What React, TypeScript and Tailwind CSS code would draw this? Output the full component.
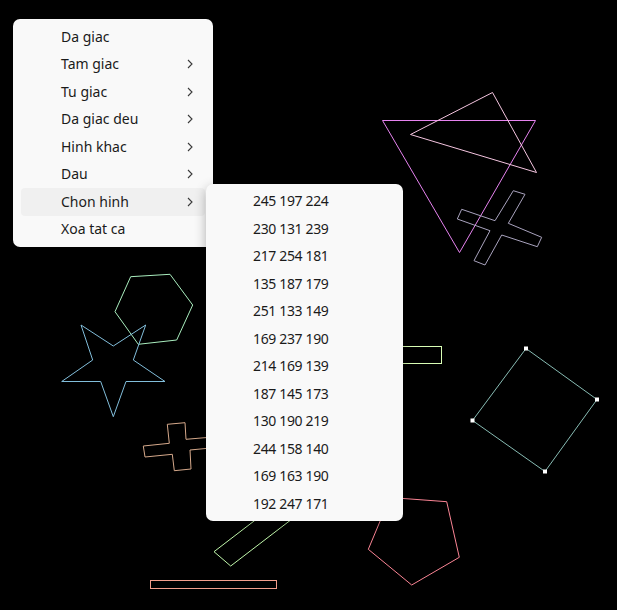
import React from "react";

const font = { fontFamily: '"Noto Sans", "Open Sans", sans-serif' };

function Chevron() {
  return (
    <svg width="6" height="10" viewBox="0 0 6 10" className="block">
      <polyline points="1,1 5,5 1,9" fill="none" stroke="#3a3a3a" strokeWidth="1.1" />
    </svg>
  );
}

const mainItems: { label: string; sub: boolean; active?: boolean }[] = [
  { label: "Da giac", sub: false },
  { label: "Tam giac", sub: true },
  { label: "Tu giac", sub: true },
  { label: "Da giac deu", sub: true },
  { label: "Hinh khac", sub: true },
  { label: "Dau", sub: true },
  { label: "Chon hinh", sub: true, active: true },
  { label: "Xoa tat ca", sub: false },
];

const colors = [
  "245 197 224",
  "230 131 239",
  "217 254 181",
  "135 187 179",
  "251 133 149",
  "169 237 190",
  "214 169 139",
  "187 145 173",
  "130 190 219",
  "244 158 140",
  "169 163 190",
  "192 247 171",
];

function Canvas() {
  const sq = [
    [526, 348.5],
    [597, 399.5],
    [545, 471.5],
    [472.5, 420.5],
  ];
  return (
    <svg width="617" height="610" viewBox="0 0 617 610" className="absolute inset-0">
      {/* big magenta triangle */}
      <polygon points="382.5,120.5 535.5,120.5 459.5,252.5" fill="none" stroke="rgb(230,131,239)" strokeWidth="1" />
      {/* pink triangle */}
      <polygon points="492.5,92.5 410.5,134.5 536.5,172.5" fill="none" stroke="rgb(245,197,224)" strokeWidth="1" />
      {/* rotated cross */}
      <polygon
        points="513.3,190.7 525,194.3 508.3,223.3 541.7,237.3 537.3,246.7 501.7,235 485,265 474,260.7 490,230.7 457.3,219 461.7,209.3 495,220.7"
        fill="none"
        stroke="rgb(169,163,190)"
        strokeWidth="1"
      />
      {/* hexagon */}
      <polygon
        points="130.7,276.7 170,274.3 192.7,305 176.7,340 138.3,344.3 115,311.7"
        fill="none"
        stroke="rgb(169,237,190)"
        strokeWidth="1"
      />
      {/* star */}
      <polygon
        points="81,325 113.3,346 145.7,325 133.3,360 165,381.5 126,381.5 113.3,416.7 100.7,381.5 61.7,381.5 92.7,360"
        fill="none"
        stroke="rgb(130,190,219)"
        strokeWidth="1"
      />
      {/* orange cross */}
      <polygon
        points="167.3,424.3 185,422.7 186,439.3 213,437 214,447.7 190,450 191,469 174.3,470.7 172.3,454.3 145,457 143.3,446 169.3,443.3"
        fill="none"
        stroke="rgb(214,169,139)"
        strokeWidth="1"
      />
      {/* small green rect */}
      <rect x="360.5" y="346.5" width="81" height="17" fill="none" stroke="rgb(217,254,181)" strokeWidth="1" />
      {/* teal square */}
      <polygon points={sq.map((p) => p.join(",")).join(" ")} fill="none" stroke="rgb(135,187,179)" strokeWidth="1" />
      {sq.map((p, i) => (
        <rect key={i} x={p[0] - 2} y={p[1] - 2} width="4" height="4" fill="#ffffff" />
      ))}
      {/* diagonal green rect */}
      <polygon points="214,551.7 230.7,566 333.8,487 317,472.7" fill="none" stroke="rgb(192,247,171)" strokeWidth="1" />
      {/* salmon rect */}
      <rect x="150.5" y="580.5" width="126" height="8" fill="none" stroke="rgb(244,158,140)" strokeWidth="1" />
      {/* pentagon */}
      <polygon
        points="390,497.5 446.7,501.7 459.3,557.3 411.7,585 368.3,549.3"
        fill="none"
        stroke="rgb(251,133,149)"
        strokeWidth="1"
      />
    </svg>
  );
}

export default function App() {
  return (
    <div className="relative w-[617px] h-[610px] bg-black overflow-hidden" style={font}>
      <Canvas />
      {/* main menu */}
      <div className="absolute left-[13px] top-[19px] w-[200px] rounded-[7px] bg-[#f9f9f9] py-[4px] px-[8px] shadow-[0_4px_12px_rgba(0,0,0,0.3)]">
        {mainItems.map((it) => (
          <div
            key={it.label}
            className={`flex items-center h-[27.5px] rounded-[4px] pl-[40px] pr-[12px] text-[14px] text-[#1b1b1b] ${
              it.active ? "bg-[#f0f0f0]" : ""
            }`}
          >
            <span className="flex-1 leading-none">{it.label}</span>
            {it.sub && <Chevron />}
          </div>
        ))}
      </div>
      {/* submenu */}
      <div className="absolute left-[206px] top-[184px] w-[197px] rounded-[7px] bg-[#f9f9f9] py-[3.5px] px-[8px] shadow-[0_4px_12px_rgba(0,0,0,0.3)]">
        {colors.map((c) => (
          <div key={c} className="flex items-center h-[27.5px] pl-[39px] text-[14px] tracking-[-0.35px] text-[#1b1b1b]">
            <span className="leading-none">{c}</span>
          </div>
        ))}
      </div>
    </div>
  );
}
